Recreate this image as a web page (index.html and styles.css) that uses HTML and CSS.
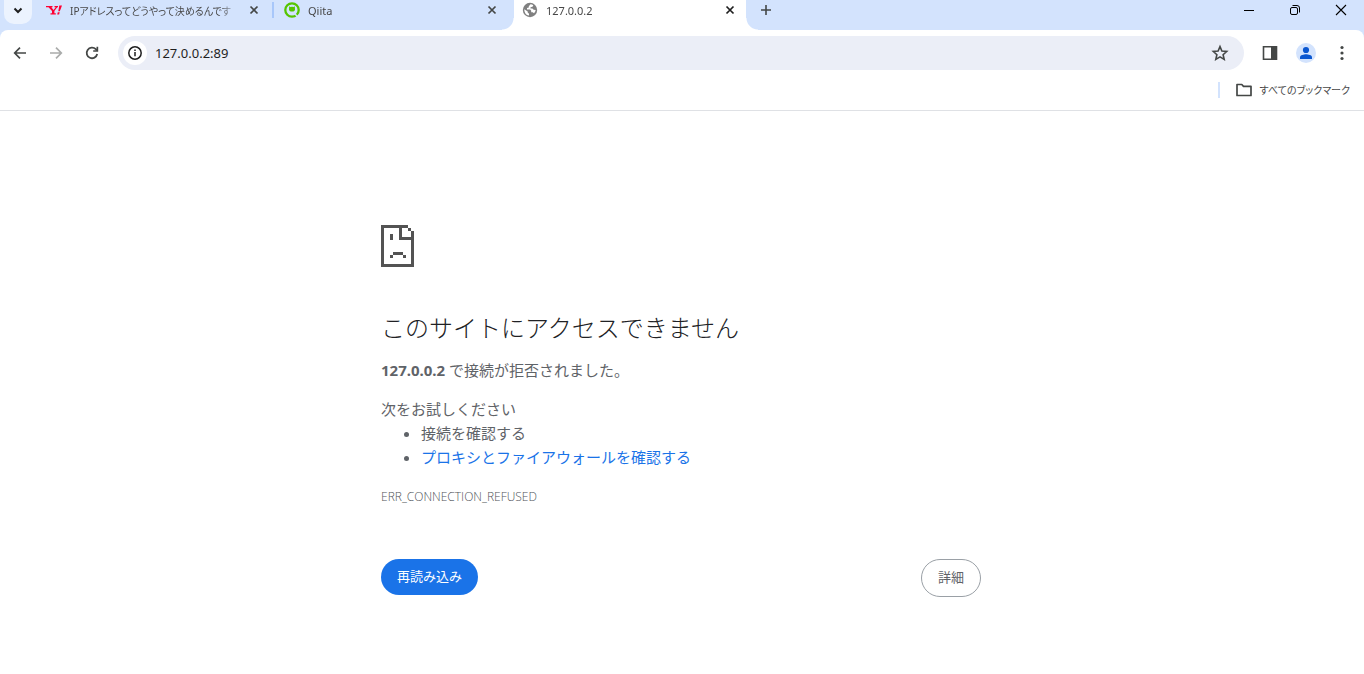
FILE: index.html
```html
<!DOCTYPE html>
<html lang="ja">
<head>
<meta charset="utf-8">
<meta name="viewport" content="width=device-width, initial-scale=1">
<title>127.0.0.2</title>
<link rel="stylesheet" href="styles.css">
</head>
<body>
<header class="browser">
  <div class="tab-strip">
    <button class="tab-search" type="button" aria-label="タブを検索">
      <svg width="16" height="16" viewBox="0 0 16 16"><path d="M4.500 6.500 8 10l3.500-3.500" fill="none" stroke="#1f1f1f" stroke-width="2"/></svg>
    </button>
    <div class="tabs">
      <div class="tab">
        <svg class="favicon" width="16" height="16" viewBox="0 0 16 16" fill="#ff0033"><path d="M0 4h6.500v1.300H5.400L7.500 8l2.300-2.700H8.500V4H12v1.300h-.8L8.400 9v2.200h1.400v1.300H4.500v-1.300H6V9L2.500 5.300H0z"/><path d="M13.300 3.500H16l-2.200 5.700h-1.500zM11.800 10.300h1.900l-.6 2.100h-1.900z"/></svg>
        <span class="tab-title tab-title-ja">IPアドレスってどうやって決めるんです</span>
        <button class="tab-close" type="button" aria-label="閉じる"><svg width="16" height="16" viewBox="0 0 16 16"><path d="m4.500 4.500 7 7m0-7-7 7" stroke="#444746" stroke-width="1.700"/></svg></button>
      </div>
      <div class="tab tab-divided">
        <svg class="favicon" width="16" height="16" viewBox="0 0 16 16"><circle cx="8" cy="8" r="6.700" fill="none" stroke="#55c500" stroke-width="2.300"/><path d="m10.200 11.200 3.400 3.400" stroke="#d3e3fd" stroke-width="1.500"/><ellipse cx="8" cy="7.200" rx="3" ry="2.400" fill="#55c500"/><path d="M5.200 6.800V4.300l2 1.100zM10.800 6.800V4.300l-2 1.100z" fill="#55c500"/></svg>
        <span class="tab-title">Qiita</span>
        <button class="tab-close" type="button" aria-label="閉じる"><svg width="16" height="16" viewBox="0 0 16 16"><path d="m4.500 4.500 7 7m0-7-7 7" stroke="#444746" stroke-width="1.700"/></svg></button>
      </div>
      <div class="tab tab-active">
        <svg class="favicon" width="16" height="16" viewBox="0 0 16 16"><circle cx="8" cy="8" r="7.200" fill="#808080"/><path d="M8.500 2.300 6.800 4.200v1.300L5 6v1.600h3.200l1 1.100v1.500h1.500l1.300 1A5.700 5.700 0 0 0 13.700 8l-2-.2-1.300-1.300H8.500V5.200l2-.5.800-1.400a5.500 5.500 0 0 0-2.800-1zM2.300 7.300A5.700 5.700 0 0 0 7 13.600v-1.900L5.700 10.600V9.500z" fill="#fff"/></svg>
        <span class="tab-title">127.0.0.2</span>
        <button class="tab-close" type="button" aria-label="閉じる"><svg width="16" height="16" viewBox="0 0 16 16"><path d="m4.500 4.500 7 7m0-7-7 7" stroke="#1f1f1f" stroke-width="1.700"/></svg></button>
      </div>
    </div>
    <button class="new-tab" type="button" aria-label="新しいタブ"><svg width="16" height="16" viewBox="0 0 16 16"><path d="M8 3v10M3 8h10" stroke="#444746" stroke-width="1.600"/></svg></button>
    <div class="window-controls">
      <button type="button" aria-label="最小化"><svg width="12" height="12" viewBox="0 0 12 12"><path d="M1 6.500h10" stroke="#000"/></svg></button>
      <button type="button" aria-label="元に戻す"><svg width="12" height="12" viewBox="0 0 12 12" fill="none" stroke="#000"><rect x="1.500" y="3.500" width="7" height="7" rx="1.500"/><path d="M3.500 1.500H8A2.500 2.500 0 0 1 10.500 4v4.500"/></svg></button>
      <button type="button" aria-label="ウィンドウを閉じる"><svg width="12" height="12" viewBox="0 0 12 12"><path d="m1 1 10 10m0-10L1 11" stroke="#000" stroke-width="1.100"/></svg></button>
    </div>
  </div>
  <div class="chrome-panel">
    <div class="toolbar">
      <button class="tool" type="button" aria-label="戻る"><svg width="16" height="16" viewBox="0 0 16 16" fill="none" stroke="#444746" stroke-width="1.700"><path d="M14 8H3M8 2.700 2.700 8 8 13.300"/></svg></button>
      <button class="tool" type="button" aria-label="進む" disabled><svg width="16" height="16" viewBox="0 0 16 16" fill="none" stroke="#aaacab" stroke-width="1.700"><path d="M2 8h11M8 2.700 13.300 8 8 13.300"/></svg></button>
      <button class="tool" type="button" aria-label="再読み込み"><svg width="16" height="16" viewBox="0 0 16 16"><path d="M13.200 9A5.300 5.300 0 1 1 11.800 4.200L13 5.500" fill="none" stroke="#444746" stroke-width="1.800"/><path d="M14.200 1.800v5H9.200V5.200h3.300V1.800z" fill="#444746"/></svg></button>
      <div class="omnibox">
        <button class="site-info" type="button" aria-label="サイト情報を表示"><svg width="16" height="16" viewBox="0 0 16 16"><circle cx="8" cy="8" r="6.200" fill="none" stroke="#1f1f1f" stroke-width="1.500"/><path d="M8 7v4.300M8 4.500v1.600" stroke="#1f1f1f" stroke-width="1.500"/></svg></button>
        <input class="address" type="text" value="127.0.0.2:89" aria-label="アドレスバー">
        <button class="bookmark" type="button" aria-label="ブックマークに追加"><svg width="18" height="18" viewBox="0 0 18 18"><path d="m9 2.600 1.900 4.500 4.800.4-3.600 3.200 1.100 4.700L9 12.900l-4.200 2.500 1.100-4.700-3.600-3.200 4.800-.4z" fill="none" stroke="#444746" stroke-width="1.600"/></svg></button>
      </div>
      <button class="tool" type="button" aria-label="サイドパネル"><svg width="16" height="16" viewBox="0 0 16 16"><path d="M1.500 1.800h13v12.400h-13z" fill="none" stroke="#444746" stroke-width="1.600"/><path d="M9 1.500h5.500v13H9z" fill="#444746"/></svg></button>
      <button class="tool" type="button" aria-label="プロフィール"><svg width="20" height="20" viewBox="0 0 20 20"><circle cx="10" cy="10" r="10" fill="#d3e3fd"/><circle cx="10" cy="7" r="3.100" fill="#0b57d0"/><path d="M4 16v-1.800c0-2 4-2.900 6-2.900s6 .9 6 2.900V16z" fill="#0b57d0"/></svg></button>
      <button class="tool" type="button" aria-label="メニュー"><svg width="16" height="16" viewBox="0 0 16 16" fill="#444746"><circle cx="8" cy="2.500" r="1.600"/><circle cx="8" cy="8" r="1.600"/><circle cx="8" cy="13.500" r="1.600"/></svg></button>
    </div>
    <div class="bookmarks-bar">
      <button class="all-bookmarks" type="button">
        <svg width="18" height="16" viewBox="0 0 18 16"><path d="M2 2.500h4.800l1.700 1.800H16v9.200H2z" fill="none" stroke="#444746" stroke-width="1.700" stroke-linejoin="round"/></svg>
        <span>すべてのブックマーク</span>
      </button>
    </div>
  </div>
</header>
<main class="error-page">
  <div class="error-content">
    <svg class="error-icon" width="33" height="42" viewBox="0 0 33 42" fill="#535353" shape-rendering="crispEdges"><path d="M0 0h27v3H3v36h27V15H18V3h3v9h9V6h3v36H0zM27 3h3v3h-3zM9 9h3v6H9zM12 27h10v3H12zM9 30h3v3H9zM22 30h3v3h-3z"/></svg>
    <h1>このサイトにアクセスできません</h1>
    <p><strong>127.0.0.2</strong> で接続が拒否されました。</p>
    <div class="suggestions">
      <p>次をお試しください</p>
      <ul>
        <li>接続を確認する</li>
        <li><a href="#proxy">プロキシとファイアウォールを確認する</a></li>
      </ul>
    </div>
    <div class="error-code">ERR_CONNECTION_REFUSED</div>
    <div class="actions">
      <button class="reload" type="button">再読み込み</button>
      <button class="details" type="button">詳細</button>
    </div>
  </div>
</main>
</body>
</html>
```
FILE: styles.css
```css
* {
  box-sizing: border-box;
}

body {
  margin: 0;
  background: #fff;
  color: #5f6368;
  font-family: "Noto Sans", "Noto Sans CJK JP", sans-serif;
  font-size: 15px;
  line-height: 24px;
}

button {
  display: flex;
  align-items: center;
  justify-content: center;
  padding: 0;
  border: 0;
  background: none;
  color: inherit;
  font: inherit;
}

svg {
  display: block;
  flex: none;
}

.browser {
  background: #d3e3fd;
}

.tab-strip {
  display: flex;
  height: 30px;
  padding-left: 4px;
}

.tab-search {
  width: 28px;
  height: 24px;
  padding-bottom: 4px;
  border-radius: 0 0 10px 10px;
  background: #ecf3fe;
}

.tabs {
  display: flex;
  gap: 6px;
  flex: 0 1 708px;
  min-width: 0;
  margin-left: 6px;
}

.tab {
  position: relative;
  display: flex;
  align-items: center;
  flex: 1 1 0;
  min-width: 0;
  padding: 0 8px 10px;
  color: #474747;
  font-size: 11px;
}

.tab-divided::before {
  content: "";
  position: absolute;
  top: 2px;
  left: -4px;
  width: 2px;
  height: 16px;
  background: #a8c7fa;
}

.tab-active {
  background: #fff;
}

.tab-active::before,
.tab-active::after {
  content: "";
  position: absolute;
  bottom: 0;
  width: 12px;
  height: 12px;
}

.tab-active::before {
  right: 100%;
  background: radial-gradient(circle at 0 0, transparent 11px, #fff 12px);
}

.tab-active::after {
  left: 100%;
  background: radial-gradient(circle at 100% 0, transparent 11px, #fff 12px);
}

.tab-title {
  flex: 1;
  min-width: 0;
  margin: 0 4px 0 8px;
  padding-top: 1px;
  overflow: hidden;
  white-space: nowrap;
  mask-image: linear-gradient(to right, #000 calc(100% - 24px), transparent);
}

.tab-title-ja {
  font-size: 10px;
  font-feature-settings: "palt";
}

.new-tab {
  width: 28px;
  height: 20px;
  margin-left: 6px;
}

.window-controls {
  display: flex;
  margin-left: auto;
}

.window-controls button {
  width: 46px;
  height: 20px;
}

.chrome-panel {
  border-bottom: 1px solid #dfe1e5;
  border-radius: 8px 8px 0 0;
  background: #fff;
}

.toolbar {
  display: flex;
  align-items: center;
  padding: 6px 4px 0 2px;
}

.tool {
  width: 36px;
  height: 34px;
}

.omnibox {
  display: flex;
  align-items: center;
  flex: 1;
  min-width: 0;
  height: 34px;
  margin: 0 8px;
  padding: 0 11px 0 5px;
  border-radius: 17px;
  background: #ebeef7;
}

.site-info {
  width: 24px;
  height: 24px;
  border-radius: 12px;
  background: #fff;
}

.address {
  flex: 1;
  min-width: 0;
  margin: 0 8px;
  padding: 0;
  border: 0;
  outline: 0;
  background: none;
  color: #1f1f1f;
  font-family: "Noto Sans", sans-serif;
  font-size: 13px;
}

.bookmark {
  width: 26px;
  height: 26px;
}

.bookmarks-bar {
  display: flex;
  justify-content: flex-end;
  padding: 12px 14px 12px;
}

.all-bookmarks {
  gap: 7px;
  height: 16px;
  padding-left: 15px;
  border-left: 2px solid #d3e3fd;
  color: #474747;
  font-size: 10px;
  font-feature-settings: "palt";
}

.error-page {
  padding: 114px 26px 77px 24px;
}

.error-content {
  max-width: 600px;
  margin: 0 auto;
}

h1 {
  margin: 46px 0 15px;
  color: #202124;
  font-size: 24px;
  font-weight: 300;
  line-height: 30px;
}

p {
  margin: 0;
}

.suggestions {
  margin-top: 15px;
}

ul {
  margin: 0;
  padding-left: 40px;
}

a {
  color: #1a73e8;
  text-decoration: none;
}

.error-code {
  margin-top: 16px;
  color: #505459;
  font-family: "Open Sans", sans-serif;
  font-size: 12px;
  font-weight: 300;
}

.actions {
  display: flex;
  align-items: flex-start;
  justify-content: space-between;
  margin-top: 50px;
}

.reload,
.details {
  height: 36px;
  padding: 0 16px 2px;
  border-radius: 20px;
  font-size: 13px;
}

.reload {
  background: #1a73e8;
  color: #fff;
}

.details {
  height: 38px;
  border: 1px solid #9aa0a6;
}
```
